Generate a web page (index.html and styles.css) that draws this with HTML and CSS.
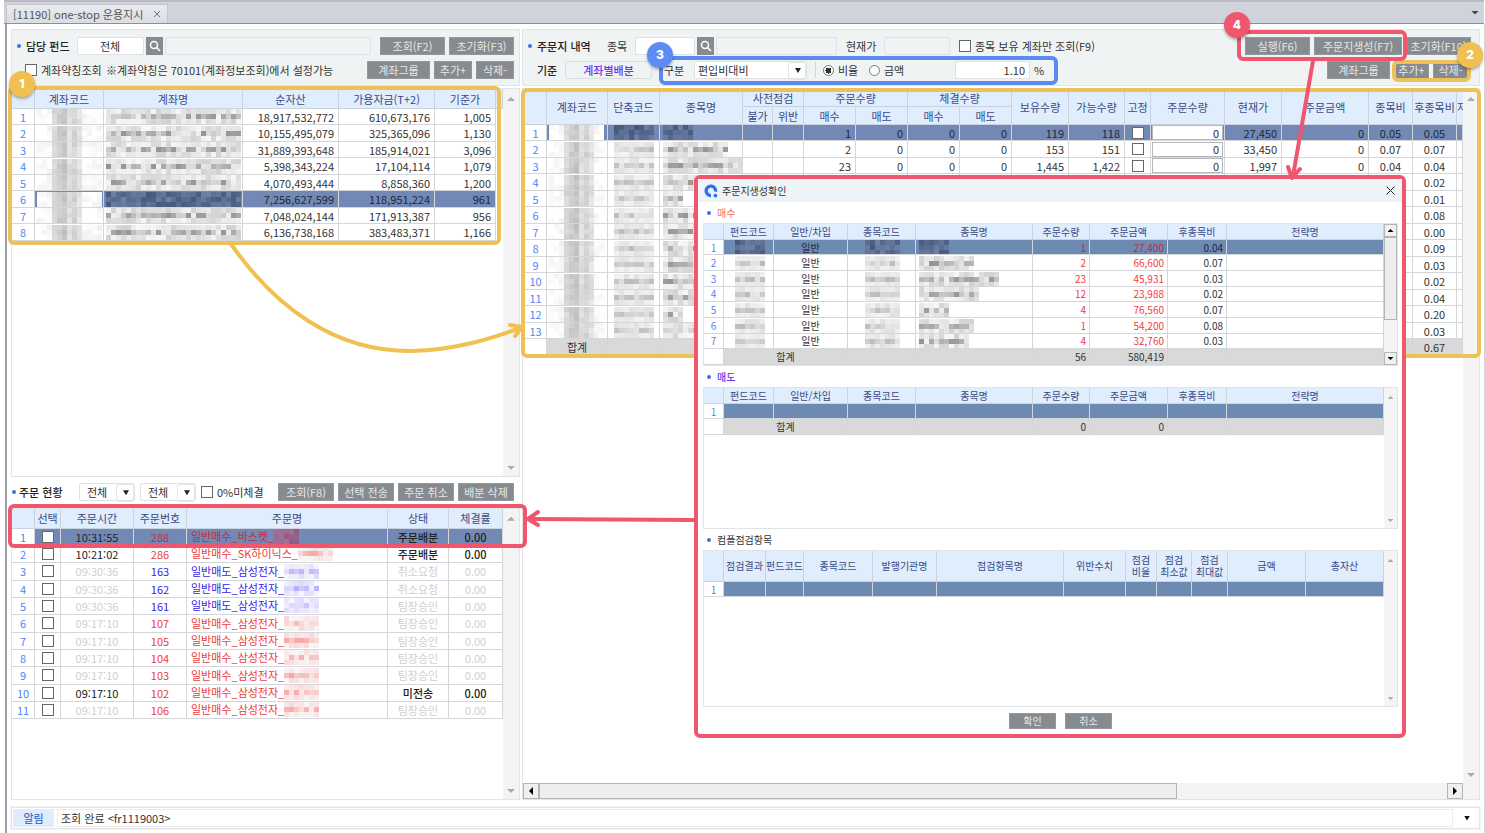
FILE: index.html
```html
<!DOCTYPE html>
<html lang="ko">
<head>
    <meta charset="UTF-8">
    <meta name="viewport" content="width=device-width, initial-scale=1.0">
    <title>[11190] one-stop 운용지시</title>
    <link rel="stylesheet" href="styles.css">
</head>
<body>
    <header class="tabs">
        <div class="tab">[11190] one-stop 운용지시 <button class="tab-close" aria-label="탭 닫기"><svg width="8" height="8" viewBox="0 0 8 8"><path d="M1 1l6 6M7 1L1 7" stroke="#777" fill="none"/></svg></button></div>
        <button class="tabs-menu" aria-label="탭 목록"><span class="arrow down"></span></button>
    </header>

    <main class="workspace">
        <div class="columns">
            <section class="column">
                <form class="filter filter-fund">
                    <div class="line">
                        <i class="dot"></i>
                        <label class="title fund-title" for="fund">담당 펀드</label>
                        <input class="field fund-input" id="fund" value="전체">
                        <button type="button" class="search" aria-label="펀드 검색"><svg width="12" height="12" viewBox="0 0 12 12"><circle cx="5" cy="5" r="3.5"/><path d="M7.6 7.6L11 11"/></svg></button>
                        <input class="field readonly grow" aria-label="펀드명" readonly>
                        <button type="button" class="btn w65 far">조회(F2)</button>
                        <button type="button" class="btn w65">초기화(F3)</button>
                    </div>
                    <div class="line indent">
                        <input type="checkbox" class="check" id="alias">
                        <label class="alias-label" for="alias">계좌약칭조회</label>
                        <span class="grow">※계좌약칭은 70101(계좌정보조회)에서 설정가능</span>
                        <button type="button" class="btn w63">계좌그룹</button>
                        <button type="button" class="btn w38">추가+</button>
                        <button type="button" class="btn w38">삭제-</button>
                    </div>
                </form>
                <div class="panel accounts">
                    <div class="sheet">
                        <table class="grid">
                            <colgroup><col class="c23"><col class="c69"><col class="c139"><col class="c96"><col class="c96"><col class="c61"><col class="c7"></colgroup>
                            <thead><tr class="h20"><th></th><th>계좌코드</th><th>계좌명</th><th>순자산</th><th>가용자금(T+2)</th><th>기준가</th><th></th></tr></thead>
                            <tbody id="accounts"></tbody>
                        </table>
                    </div>
                    <div class="vscroll"><span class="arrow up"></span><span class="arrow down"></span></div>
                </div>

                <form class="order-bar">
                    <i class="dot"></i>
                    <span class="title order-title">주문 현황</span>
                    <span class="select w56"><select aria-label="구분"><option>전체</option></select></span>
                    <span class="select w56"><select aria-label="상태"><option>전체</option></select></span>
                    <input type="checkbox" class="check" id="unfilled">
                    <label class="grow" for="unfilled">0%미체결</label>
                    <button type="button" class="btn w56">조회(F8)</button>
                    <button type="button" class="btn w56">선택 전송</button>
                    <button type="button" class="btn w56">주문 취소</button>
                    <button type="button" class="btn w56">배분 삭제</button>
                </form>
                <div class="panel orders">
                    <div class="sheet">
                        <table class="grid order-grid">
                            <colgroup><col class="c23"><col class="c26"><col class="c73"><col class="c53"><col class="c201"><col class="c61"><col class="c54"></colgroup>
                            <thead><tr class="h20"><th></th><th>선택</th><th>주문시간</th><th>주문번호</th><th>주문명</th><th>상태</th><th>체결률</th></tr></thead>
                            <tbody id="orders"></tbody>
                        </table>
                    </div>
                    <div class="vscroll"><span class="arrow up"></span><span class="arrow down"></span></div>
                </div>
            </section>

            <section class="column">
                <form class="filter filter-sheet">
                    <div class="line">
                        <i class="dot"></i>
                        <span class="title sheet-title">주문지 내역</span>
                        <label class="stock-label" for="stock">종목</label>
                        <input class="field stock-input" id="stock">
                        <button type="button" class="search" aria-label="종목 검색"><svg width="12" height="12" viewBox="0 0 12 12"><circle cx="5" cy="5" r="3.5"/><path d="M7.6 7.6L11 11"/></svg></button>
                        <input class="field readonly stock-name" aria-label="종목명" readonly>
                        <label class="price-label" for="price">현재가</label>
                        <input class="field readonly price-input" id="price" readonly>
                        <input type="checkbox" class="check" id="held">
                        <label class="grow" for="held">종목 보유 계좌만 조회(F9)</label>
                        <button type="button" class="btn w65">실행(F6)</button>
                        <button type="button" class="btn w88">주문지생성(F7)</button>
                        <button type="button" class="btn w65">초기화(F10)</button>
                    </div>
                    <div class="line indent-small">
                        <span class="title basis-title">기준</span>
                        <button type="button" class="basis">계좌별배분</button>
                        <label class="kind-label" for="kind">구분</label>
                        <span class="select kind"><select id="kind"><option>편입비대비</option></select></span>
                        <span class="split"></span>
                        <input type="radio" class="radio" name="unit" id="ratio" checked>
                        <label class="unit-label" for="ratio">비율</label>
                        <input type="radio" class="radio" name="unit" id="amount">
                        <label class="unit-label amount-label" for="amount">금액</label>
                        <input class="field rate" id="rate" aria-label="비율 값" value="1.10">
                        <label class="grow" for="rate">%</label>
                        <button type="button" class="btn w63">계좌그룹</button>
                        <button type="button" class="btn w35">추가+</button>
                        <button type="button" class="btn w35">삭제-</button>
                    </div>
                </form>
                <div class="panel tickets">
                    <div class="tickets-main">
                        <div class="sheet sheet-inset">
                            <table class="grid">
                                <colgroup><col class="c22"><col class="c61"><col class="c52"><col class="c83"><col class="c30"><col class="c31"><col class="c52"><col class="c52"><col class="c52"><col class="c52"><col class="c57"><col class="c56"><col class="c26"><col class="c74"><col class="c57"><col class="c87"><col class="c44"><col class="c44"><col class="c6"></colgroup>
                                <thead>
                                    <tr class="h18">
                                        <th rowspan="2"></th><th rowspan="2">계좌코드</th><th rowspan="2">단축코드</th><th rowspan="2">종목명</th>
                                        <th colspan="2">사전점검</th><th colspan="2">주문수량</th><th colspan="2">체결수량</th>
                                        <th rowspan="2">보유수량</th><th rowspan="2">가능수량</th><th rowspan="2">고정</th><th rowspan="2">주문수량</th>
                                        <th rowspan="2">현재가</th><th rowspan="2">주문금액</th><th rowspan="2">종목비</th><th rowspan="2">후종목비</th><th rowspan="2" class="cut">저</th>
                                    </tr>
                                    <tr class="h18"><th>불가</th><th>위반</th><th>매수</th><th>매도</th><th>매수</th><th>매도</th></tr>
                                </thead>
                                <tbody id="tickets"></tbody>
                            </table>
                        </div>
                        <div class="vscroll"><span class="arrow up"></span><span class="arrow down"></span></div>
                    </div>
                    <div class="hscroll"><span class="hbtn"><i class="arrow left"></i></span><span class="hthumb"></span><span class="htrack"></span><span class="hbtn"><i class="arrow right"></i></span></div>
                </div>
            </section>
        </div>

        <footer class="status">
            <span class="status-tag">알림</span>
            <span class="status-text">조회 완료 &lt;fr1119003&gt;</span>
            <button class="status-more" aria-label="알림 목록"><span class="arrow down"></span></button>
        </footer>
    </main>

    <section class="dialog" role="dialog" aria-labelledby="dialog-title">
        <div class="dialog-head">
            <svg width="14" height="14" viewBox="0 0 14 14"><path d="M7 11.5A4.7 4.7 0 1 1 11.5 7.6" fill="none" stroke="#2f6fe8" stroke-width="3.4"/><circle cx="11.4" cy="11.6" r="1.9" fill="#2f6fe8"/></svg>
            <h1 id="dialog-title">주문지생성확인</h1>
            <button class="dialog-close" aria-label="닫기"><svg width="9" height="9" viewBox="0 0 9 9"><path d="M.5.5l8 8M8.5.5l-8 8" stroke="#222" fill="none"/></svg></button>
        </div>
        <div class="dialog-body">
            <h2 class="buy"><i class="dot"></i>매수</h2>
            <div class="panel d-buy">
                <div class="sheet">
                    <table class="grid small">
                        <colgroup><col class="c20"><col class="c50"><col class="c74"><col class="c68"><col class="c117"><col class="c57"><col class="c78"><col class="c59"><col class="c157"></colgroup>
                        <thead><tr class="h16"><th></th><th>펀드코드</th><th>일반/차입</th><th>종목코드</th><th>종목명</th><th>주문수량</th><th>주문금액</th><th>후종목비</th><th>전략명</th></tr></thead>
                        <tbody id="buys"></tbody>
                    </table>
                </div>
                <div class="vscroll live"><span class="vbtn"><i class="arrow up"></i></span><span class="vthumb"></span><span class="vtrack"></span><span class="vbtn"><i class="arrow down"></i></span></div>
            </div>
            <h2 class="sell"><i class="dot"></i>매도</h2>
            <div class="panel d-sell">
                <div class="sheet">
                    <table class="grid small">
                        <colgroup><col class="c20"><col class="c50"><col class="c74"><col class="c68"><col class="c117"><col class="c57"><col class="c78"><col class="c59"><col class="c157"></colgroup>
                        <thead><tr class="h16"><th></th><th>펀드코드</th><th>일반/차입</th><th>종목코드</th><th>종목명</th><th>주문수량</th><th>주문금액</th><th>후종목비</th><th>전략명</th></tr></thead>
                        <tbody>
                            <tr class="selected"><td class="no">1</td><td></td><td></td><td></td><td></td><td></td><td></td><td></td><td></td></tr>
                            <tr class="total"><td class="no"></td><td colspan="2" class="mid">합계</td><td></td><td></td><td>0</td><td>0</td><td></td><td></td></tr>
                        </tbody>
                    </table>
                </div>
                <div class="vscroll"><span class="arrow up"></span><span class="arrow down"></span></div>
            </div>
            <h2><i class="dot"></i>컴플점검항목</h2>
            <div class="panel d-check">
                <div class="sheet">
                    <table class="grid small">
                        <colgroup><col class="c20"><col class="c42"><col class="c38"><col class="c69"><col class="c64"><col class="c127"><col class="c62"><col class="c31"><col class="c35"><col class="c36"><col class="c78"><col class="c78"></colgroup>
                        <thead><tr class="h31"><th></th><th>점검결과</th><th>펀드코드</th><th>종목코드</th><th>발행기관명</th><th>점검항목명</th><th>위반수치</th><th>점검<br>비율</th><th>점검<br>최소값</th><th>점검<br>최대값</th><th>금액</th><th>총자산</th></tr></thead>
                        <tbody>
                            <tr class="selected"><td class="no">1</td><td></td><td></td><td></td><td></td><td></td><td></td><td></td><td></td><td></td><td></td><td></td></tr>
                        </tbody>
                    </table>
                </div>
                <div class="vscroll"><span class="arrow up"></span><span class="arrow down"></span></div>
            </div>
            <div class="dialog-foot">
                <button class="btn small-btn">확인</button>
                <button class="btn small-btn">취소</button>
            </div>
        </div>
    </section>

    <!-- guide marks over the screen -->
    <div class="mark mark-accounts"></div>
    <div class="mark mark-tickets"></div>
    <div class="mark mark-edit"></div>
    <div class="mark mark-kind"></div>
    <div class="mark mark-run"></div>
    <div class="mark mark-order"></div>
    <svg class="arrows" width="1485" height="833" viewBox="0 0 1485 833" fill="none" stroke-width="4" stroke-linecap="round" stroke-linejoin="round">
        <g stroke="#f0c150"><path d="M231 244C275 307 335 352 412 351C455 350 490 339 520 328"/><path d="M510 325L522 327L515 336"/></g>
        <g stroke="#f0566e"><path d="M1313 61L1293 176"/><path d="M1288 167L1292 178L1300 169"/><path d="M696 520L530 519"/><path d="M538 512L528 519L538 525"/></g>
    </svg>
    <span class="badge badge-1">1</span>
    <span class="badge badge-2">2</span>
    <span class="badge badge-3">3</span>
    <span class="badge badge-4">4</span>

    <script src="script.js"></script>
</body>
</html>
```

FILE: styles.css
```css
* {
    padding: 0;
    margin: 0;
    box-sizing: border-box;
}

body {
    display: flex;
    flex-direction: column;
    position: relative;
    min-height: 100vh;
    background: #fff;
    color: #333;
    font-family: "Noto Sans CJK KR", "Noto Sans", sans-serif;
    font-size: 11px;
    line-height: 14px;
    overflow: hidden;
}

button, input, select {
    font: inherit;
    color: inherit;
    border: none;
    background: none;
}

label, span, button {
    white-space: nowrap;
}

/* tab strip */
.tabs {
    display: flex;
    justify-content: space-between;
    align-items: stretch;
    height: 24px;
    margin: 0 1px 0 4px;
    padding-left: 2px;
    background: #d0d3dc;
    border-top: 2px solid #b9bbc4;
    border-bottom: 1px solid #8e9098;
}

.tab {
    display: flex;
    align-items: center;
    gap: 10px;
    margin-top: 2px;
    padding: 0 6px;
    background: linear-gradient(#e9ebef, #dadde2);
    border: 1px solid #c3c6cd;
    border-bottom: none;
    color: #555;
}

.tab-close {
    width: 8px;
    height: 8px;
    display: flex;
}

.tabs-menu {
    padding: 0 5px;
}

.arrow {
    display: block;
    width: 8px;
    height: 4px;
    background: #444;
}

.arrow.down { clip-path: polygon(0 0, 100% 0, 50% 100%); }
.arrow.up { clip-path: polygon(50% 0, 100% 100%, 0 100%); }
.arrow.left { width: 4px; height: 8px; clip-path: polygon(100% 0, 100% 100%, 0 50%); }
.arrow.right { width: 4px; height: 8px; clip-path: polygon(0 0, 100% 50%, 0 100%); }

.workspace {
    flex: 1;
    display: flex;
    flex-direction: column;
    margin-left: 5px;
    padding: 5px 4px 4px;
    border-left: 2px solid #9fa1aa;
    border-right: 1px solid #d5d6da;
}

.columns {
    flex: 1;
    display: grid;
    grid-template-columns: 509px 1fr;
    gap: 2px;
}

.column {
    display: flex;
    flex-direction: column;
    min-width: 0;
}

/* filter area */
.filter {
    display: flex;
    flex-direction: column;
    gap: 6px;
    height: 57px;
    margin-bottom: 2px;
    padding: 7px 5px;
    background: #f0f3f4;
    border: 1px solid #e2e5e6;
}

.filter-sheet {
    padding-right: 8px;
}

.line {
    display: flex;
    align-items: center;
    height: 18px;
}

.indent { padding-left: 8px; }
.indent-small { padding: 0 3px 0 9px; }
.grow { flex: 1; min-width: 0; }

.dot {
    flex: none;
    width: 4px;
    height: 4px;
    border-radius: 50%;
    background: #3f6fe8;
}

.title {
    font-weight: 500;
    color: #222;
}

.fund-title { width: 56px; padding-left: 5px; }
.sheet-title { width: 75px; padding-left: 5px; }
.order-title { width: 63px; padding-left: 3px; }
.basis-title { width: 28px; }
.alias-label { width: 69px; padding-left: 4px; }
.stock-label { width: 28px; }
.price-label { width: 47px; padding-left: 9px; }
.kind-label { width: 42px; padding-left: 12px; }

.field {
    height: 18px;
    padding: 0 4px;
    background: #fff;
    border: 1px solid #dfe2e4;
    border-radius: 2px;
}

.readonly { background: #f0f3f4; }
.fund-input { width: 67px; padding-left: 22px; }
.stock-input { width: 60px; }
.stock-name { width: 121px; }
.price-input { width: 66px; margin-right: 9px; }
.rate { width: 75px; margin-right: 4px; text-align: right; }

.search {
    display: flex;
    align-items: center;
    justify-content: center;
    width: 17px;
    height: 18px;
    margin: 0 2px;
    background: #868b90;
}

.search svg {
    fill: none;
    stroke: #fff;
    stroke-width: 1.5;
}

.btn {
    flex: none;
    height: 18px;
    margin-left: 4px;
    background: #868b90;
    border: 1px solid #94989c;
    color: #e6e8e9;
    text-align: center;
    line-height: 16px;
    overflow: hidden;
}

.far { margin-left: 9px; }
.w35 { width: 35px; }
.w38 { width: 38px; }
.w56 { width: 56px; }
.w63 { width: 63px; }
.w65 { width: 65px; }
.w88 { width: 88px; }

.check {
    flex: none;
    appearance: none;
    width: 12px;
    height: 12px;
    background: #fff;
    border: 1px solid #666;
}

.check + label { padding-left: 4px; }

.radio {
    flex: none;
    appearance: none;
    width: 11px;
    height: 11px;
    background: #fff;
    border: 1px solid #777;
    border-radius: 50%;
}

.radio:checked { background: radial-gradient(circle, #333 0 3px, #fff 3px); }
.unit-label { width: 35px; padding-left: 4px; }
.amount-label { width: 75px; }

.basis {
    width: 87px;
    height: 18px;
    border: 1px solid #d9dcde;
    border-radius: 3px;
    color: #6a35f0;
    font-weight: 500;
}

.select {
    position: relative;
    display: flex;
    height: 18px;
    background: #fff;
    border: 1px solid #dfe2e4;
    border-radius: 2px;
}

.select select {
    appearance: none;
    width: 100%;
    padding: 0 20px 0 7px;
}

.select::before {
    content: "";
    position: absolute;
    right: 0;
    top: 0;
    width: 16px;
    height: 16px;
    border: 1px solid #e3e5e7;
    border-radius: 3px;
}

.select::after {
    content: "";
    position: absolute;
    right: 5px;
    top: 6px;
    width: 6px;
    height: 5px;
    background: #222;
    clip-path: polygon(0 0, 100% 0, 50% 100%);
}

.kind { width: 113px; }
.kind select { padding-left: 3px; }

.split {
    width: 1px;
    height: 16px;
    margin: 0 7px 0 8px;
    background: #d5d8da;
}

.order-bar {
    display: flex;
    align-items: center;
    height: 31px;
    padding: 0 6px 0 1px;
}

.order-bar .select { margin-right: 5px; }

/* tables */
.panel {
    display: flex;
    min-height: 0;
    border: 1px solid #e2e3e5;
    background: #fff;
}

.accounts { flex: 389 1 0; }
.orders { flex: 292 1 0; }
.tickets { flex: 1; flex-direction: column; }

.tickets-main {
    flex: 1;
    display: flex;
    min-height: 0;
}

.sheet {
    flex: 1;
    min-width: 0;
}

.sheet-inset { padding-left: 2px; }

.grid {
    width: 100%;
    table-layout: fixed;
    border-collapse: separate;
    border-spacing: 0;
}

.grid th {
    background: #e0edfd;
    border-right: 1px solid #c9d3e0;
    border-bottom: 1px solid #c9d3e0;
    color: #3a4a85;
    font-weight: 400;
    white-space: nowrap;
}

.grid .cut {
    overflow: hidden;
    text-align: left;
    border-right: none;
}

.grid td {
    height: 16px;
    padding: 0 4px;
    border-right: 1px solid #d3d6da;
    border-bottom: 1px solid #d3d6da;
    line-height: 14px;
    text-align: right;
    white-space: nowrap;
    overflow: hidden;
}

.grid tbody tr:nth-child(even) td { height: 17px; }
.order-grid tbody tr td, .order-grid tbody tr:nth-child(even) td { height: 17px; }
.order-grid tbody tr:nth-child(3n) td { height: 18px; }

.selected td { background: #7289b5; color: #1f2738; }
.small .selected td { background: #6d8ab3; line-height: 13px; }
.total td { background: #d9d9d9; }

.grid tr td.no {
    padding: 0;
    background: #fff;
    color: #4f86f0;
    text-align: center;
}

.grid td.mid { text-align: center; padding: 0; }
.grid td.left { text-align: left; }
.grid td.void { border: none; background: #fff; }
.grid td.mosaic-cell { padding: 0 2px; text-align: left; }
.grid td .check { display: block; margin: 0 auto; }

.qty {
    display: block;
    width: 100%;
    height: 15px;
    padding: 0 3px;
    background: #fff;
    border: 1px solid #b5b7ba;
    text-align: right;
}

.grid td.qty-cell { padding: 0 1px; }
.mosaic { display: block; }
.mosaic.inline { display: inline-block; vertical-align: top; }
.small .mosaic { height: 14px; }

.red td.tone { color: #ee3b3b; }
.blue td.tone { color: #3a22ee; }
.red.selected td.tone { color: #c22c3c; }
.dim td { color: #cfcfcf; }
.strong td { color: #222; }
.grid .strong td.bold { font-weight: 500; }

.small {
    font-size: 10px;
}

.small th { line-height: 12px; }

.grid.small td, .grid.small tbody tr:nth-child(even) td {
    height: 16px;
    padding: 0 3px;
}

.grid.small tbody tr:nth-child(3n+1) td { height: 15px; }
.grid.small tbody tr td.no, .grid.small tbody tr td.mid { padding: 0; }
.small td.price { color: #f23c3c; }
.small .selected td.price { color: #c22c3c; }

.h16 { height: 16px; }
.h18 { height: 18px; }
.h20 { height: 20px; }
.h31 { height: 31px; }

.c6 { width: 6px; } .c7 { width: 7px; } .c20 { width: 20px; } .c22 { width: 22px; }
.c23 { width: 23px; } .c26 { width: 26px; } .c30 { width: 30px; } .c31 { width: 31px; }
.c35 { width: 35px; } .c36 { width: 36px; } .c38 { width: 38px; } .c42 { width: 42px; }
.c44 { width: 44px; } .c50 { width: 50px; } .c52 { width: 52px; } .c53 { width: 53px; }
.c54 { width: 54px; } .c56 { width: 56px; } .c57 { width: 57px; } .c59 { width: 59px; }
.c61 { width: 61px; } .c62 { width: 62px; } .c64 { width: 64px; } .c68 { width: 68px; }
.c69 { width: 69px; } .c73 { width: 73px; } .c74 { width: 74px; } .c78 { width: 78px; }
.c83 { width: 83px; } .c87 { width: 87px; } .c96 { width: 96px; } .c117 { width: 117px; }
.c127 { width: 127px; } .c139 { width: 139px; } .c157 { width: 157px; } .c201 { width: 201px; }

/* scroll bars */
.vscroll {
    flex: none;
    display: flex;
    flex-direction: column;
    justify-content: space-between;
    align-items: center;
    width: 16px;
    padding: 8px 0 6px;
    background: #f4f4f5;
}

.vscroll > .arrow { background: #aaa; }

.dialog .vscroll { width: 13px; }
.dialog .vscroll > .arrow { width: 6px; height: 3px; }

.vscroll.live {
    padding: 0;
    align-items: stretch;
    justify-content: flex-start;
}

.vbtn, .hbtn {
    display: flex;
    align-items: center;
    justify-content: center;
    background: #f0f0f0;
    border: 1px solid #b5b5b5;
}

.vbtn { height: 13px; }
.vbtn .arrow, .hbtn .arrow { background: #000; }
.vbtn .arrow { width: 6px; height: 3px; }
.vthumb { flex: 82; background: #eee; border: 1px solid #b5b5b5; }
.vtrack { flex: 32; }

.hscroll {
    display: flex;
    height: 16px;
    padding-right: 16px;
    background: #f4f4f5;
}

.hbtn { width: 16px; }
.hthumb { flex: 637; background: #eee; border: 1px solid #b5b5b5; }
.htrack { flex: 271; }

/* status line */
.status {
    display: flex;
    align-items: stretch;
    gap: 3px;
    height: 22px;
    margin-top: 7px;
    padding: 1px;
    background: #fff;
    border: 1px solid #e6e6e6;
    outline: 1px solid #f2f2f2;
    line-height: 18px;
}

.status-tag {
    width: 41px;
    background: #e0ebfb;
    color: #3a72cf;
    text-align: center;
    font-weight: 500;
}

.status-text {
    flex: 1;
    padding-left: 3px;
    border: 1px solid #ececec;
    line-height: 16px;
}

.status-more {
    display: flex;
    align-items: center;
    justify-content: center;
    width: 22px;
}

.status-more .arrow { width: 6px; height: 5px; background: #111; }

/* confirm dialog */
.dialog {
    position: absolute;
    z-index: 1;
    left: 694px;
    right: 79px;
    top: 175px;
    background: #fff;
    border: 4px solid #f0566e;
    border-radius: 6px;
    font-size: 10px;
}

.dialog-head {
    display: flex;
    align-items: center;
    gap: 4px;
    height: 23px;
    padding: 0 6px;
    background: #eef3f7;
}

.dialog h1 {
    flex: 1;
    font-size: 10px;
    font-weight: 400;
}

.dialog-close {
    display: flex;
    margin-right: 1px;
}

.dialog-body { padding: 0 4px 5px 5px; }

.dialog h2 {
    display: flex;
    align-items: center;
    gap: 6px;
    height: 21px;
    padding-left: 4px;
    font-size: 10px;
    font-weight: 400;
}

.dialog h2.buy { color: #f5705f; }
.dialog h2.sell { color: #6a35f0; font-weight: 500; }
.d-buy { height: 143px; }
.d-sell { height: 142px; }
.d-check { height: 157px; }

.dialog-foot {
    display: flex;
    justify-content: center;
    gap: 5px;
    padding-top: 6px;
    padding-left: 16px;
}

.small-btn {
    width: 47px;
    height: 16px;
    line-height: 14px;
}

/* guide marks */
.mark {
    position: absolute;
    border: 4px solid #edc158;
    border-radius: 6px;
    pointer-events: none;
}

.mark-accounts { left: 8px; top: 86px; width: 493px; height: 159px; }
.mark-tickets { left: 521px; right: 4px; top: 88px; height: 270px; }
.mark-edit { right: 14px; top: 60px; width: 79px; height: 22px; }
.mark-kind { left: 659px; top: 56px; width: 399px; height: 29px; border-color: #5b8bf0; }
.mark-run { right: 78px; top: 30px; width: 170px; height: 31px; border-color: #f0566e; }
.mark-order { left: 8px; top: 504px; width: 519px; height: 44px; border-color: #f0566e; }

.arrows {
    position: absolute;
    left: 0;
    top: 0;
    z-index: 2;
    pointer-events: none;
}

.badge {
    position: absolute;
    z-index: 3;
    width: 26px;
    height: 26px;
    border-radius: 50%;
    background: #f0c150;
    box-shadow: 0 2px 3px rgba(0, 0, 0, 0.3);
    color: #fff;
    font-family: Inter, sans-serif;
    font-size: 12px;
    font-weight: 800;
    line-height: 26px;
    text-align: center;
}

.badge-1 { left: 9px; top: 71px; }
.badge-2 { right: 2px; top: 42px; }
.badge-3 { left: 647px; top: 42px; background: #5b8cf6; }
.badge-4 { right: 235px; top: 12px; background: #f0566e; }
```

FILE: script.js
```js
const accounts = [
    ["18,917,532,772", "610,673,176", "1,005"],
    ["10,155,495,079", "325,365,096", "1,130"],
    ["31,889,393,648", "185,914,021", "3,096"],
    ["5,398,343,224", "17,104,114", "1,079"],
    ["4,070,493,444", "8,858,360", "1,200"],
    ["7,256,627,599", "118,951,224", "961"],
    ["7,048,024,144", "171,913,387", "956"],
    ["6,136,738,168", "383,483,371", "1,166"]
];

// state, time, number, name, status
const orders = [
    ["red strong selected", "10:31:55", "288", "일반매수_바스켓_", "주문배분"],
    ["red strong", "10:21:02", "286", "일반매수_SK하이닉스_", "주문배분"],
    ["blue dim", "09:30:36", "163", "일반매도_삼성전자_", "취소요청"],
    ["blue dim", "09:30:36", "162", "일반매도_삼성전자_", "취소요청"],
    ["blue dim", "09:30:36", "161", "일반매도_삼성전자_", "팀장승인"],
    ["red dim", "09:17:10", "107", "일반매수_삼성전자_", "팀장승인"],
    ["red dim", "09:17:10", "105", "일반매수_삼성전자_", "팀장승인"],
    ["red dim", "09:17:10", "104", "일반매수_삼성전자_", "팀장승인"],
    ["red dim", "09:17:10", "103", "일반매수_삼성전자_", "팀장승인"],
    ["red strong", "09:17:10", "102", "일반매수_삼성전자_", "미전송"],
    ["red dim", "09:17:10", "106", "일반매수_삼성전자_", "팀장승인"]
];

const tickets = [
    ["1", "119", "118", "27,450", "0.05", "0.05", 6],
    ["2", "153", "151", "33,450", "0.07", "0.07", 13],
    ["23", "1,445", "1,422", "1,997", "0.04", "0.04", 16],
    ["", "", "", "", "", "0.02", 11],
    ["", "", "", "", "", "0.01", 4],
    ["", "", "", "", "", "0.08", 12],
    ["", "", "", "", "", "0.00", 12],
    ["", "", "", "", "", "0.09", 12],
    ["", "", "", "", "", "0.03", 12],
    ["", "", "", "", "", "0.02", 12],
    ["", "", "", "", "", "0.04", 8],
    ["", "", "", "", "", "0.20", 4],
    ["", "", "", "", "", "0.03", 12]
];

const buys = [
    ["1", "27,400", "0.04", 6],
    ["2", "66,600", "0.07", 11],
    ["23", "45,931", "0.03", 16],
    ["12", "23,988", "0.02", 12],
    ["4", "76,560", "0.07", 6],
    ["1", "54,200", "0.08", 11],
    ["4", "32,760", "0.03", 10]
];

let seed = 7;

function random() {
    seed = (seed * 16807) % 2147483647;
    return seed / 2147483647;
}

// base lightness of the columns of a hidden account code
const codeTones = [252, 252, 248, 216, 206, 198, 222, 212, 226, 250, 252, 250, 248];
const ranges = {
    gray: () => { const v = 150 + Math.round(random() * 95); return [v, v - 2, v - 3]; },
    soft: () => { const v = 188 + Math.round(random() * 45); return [v, v - 2, v - 3]; },
    dark: () => { const v = Math.round(random() * 40); return [70 + v, 88 + v, 126 + v]; },
    red: () => { const v = Math.round(random() * 75); return [247, 165 + v, 165 + v]; },
    blue: () => { const v = Math.round(random() * 65); return [180 + v, 175 + v, 252]; },
    reddark: () => { const v = Math.round(random() * 24); return [140 + v, 90 + v, 128 + v]; }
};

function mosaic(cells, kind, extra = "", offset = 0) {
    let rects = "";
    for (let y = 0; y < 3; y++) {
        for (let x = 0; x < cells; x++) {
            let color;
            if (kind === "code") {
                const v = Math.min(255, codeTones[x] + Math.round(random() * 16) - 8);
                color = [v, v, v];
            } else {
                color = ranges[kind]();
                // top and bottom of the letters are lighter
                if (y !== 1 && kind !== "dark" && kind !== "reddark") {
                    color = color.map(c => Math.round(c + (250 - c) * 0.6));
                }
            }
            rects += `<rect x="${offset + x * 5}" y="${y * 5}" width="5" height="5" fill="rgb(${color})"/>`;
        }
    }
    return `<svg class="mosaic ${extra}" width="${offset + cells * 5}" height="15">${rects}</svg>`;
}

function fill(id, rows) {
    document.getElementById(id).innerHTML = rows.join("");
}

fill("accounts", accounts.map((row, i) => `
    <tr class="${i === 5 ? "selected" : ""}">
        <td class="no">${i + 1}</td>
        <td class="mosaic-cell">${mosaic(13, "code")}</td>
        <td class="mosaic-cell">${mosaic(27, i === 5 ? "dark" : "gray")}</td>
        <td>${row[0]}</td><td>${row[1]}</td><td>${row[2]}</td><td class="void"></td>
    </tr>`));

fill("orders", orders.map((row, i) => {
    const kind = i === 0 ? "reddark" : row[0].split(" ")[0];
    return `
    <tr class="${row[0]}">
        <td class="no">${i + 1}</td>
        <td class="mid"><input type="checkbox" class="check" aria-label="${row[2]} 선택"></td>
        <td class="mid">${row[1]}</td>
        <td class="mid tone">${row[2]}</td>
        <td class="left tone">${row[3]}${mosaic(i === 0 ? 5 : 7, kind, "inline")}</td>
        <td class="mid bold">${row[4]}</td>
        <td class="mid bold">0.00</td>
    </tr>`;
}));

fill("tickets", tickets.map((row, i) => {
    const zero = row[0] ? "0" : "";
    return `
    <tr class="${i === 0 ? "selected" : ""}">
        <td class="no">${i + 1}</td>
        <td class="mosaic-cell">${mosaic(11, "code")}</td>
        <td class="mosaic-cell">${mosaic(8, i === 0 ? "dark" : "soft", "", 4)}</td>
        <td class="mosaic-cell">${mosaic(row[6], i === 0 ? "dark" : "gray", "", 1)}</td>
        <td></td><td></td>
        <td>${row[0]}</td><td>${zero}</td><td>${zero}</td><td>${zero}</td>
        <td>${row[1]}</td><td>${row[2]}</td>
        <td class="mid">${zero && `<input type="checkbox" class="check" aria-label="${i + 1}행 고정">`}</td>
        <td class="qty-cell">${zero && `<input class="qty" aria-label="${i + 1}행 주문수량" value="0">`}</td>
        <td>${row[3]}</td><td>${zero}</td>
        <td class="mid">${row[4]}</td><td class="mid">${row[5]}</td><td></td>
    </tr>`;
}).concat(`
    <tr class="total"><td class="no"></td><td class="mid">합계</td>${"<td></td>".repeat(15)}<td class="mid">0.67</td><td></td></tr>`));

fill("buys", buys.map((row, i) => `
    <tr class="${i === 0 ? "selected" : ""}">
        <td class="no">${i + 1}</td>
        <td class="mosaic-cell">${mosaic(6, i === 0 ? "dark" : "soft", "", 8)}</td>
        <td class="mid">일반</td>
        <td class="mosaic-cell">${mosaic(7, i === 0 ? "dark" : "soft", "", 14)}</td>
        <td class="mosaic-cell">${mosaic(row[3], i === 0 ? "dark" : "gray")}</td>
        <td class="price">${row[0]}</td><td class="price">${row[1]}</td><td>${row[2]}</td><td></td>
    </tr>`).concat(`
    <tr class="total"><td class="no"></td><td colspan="2" class="mid">합계</td><td></td><td></td><td>56</td><td>580,419</td><td></td><td></td></tr>`));
```
